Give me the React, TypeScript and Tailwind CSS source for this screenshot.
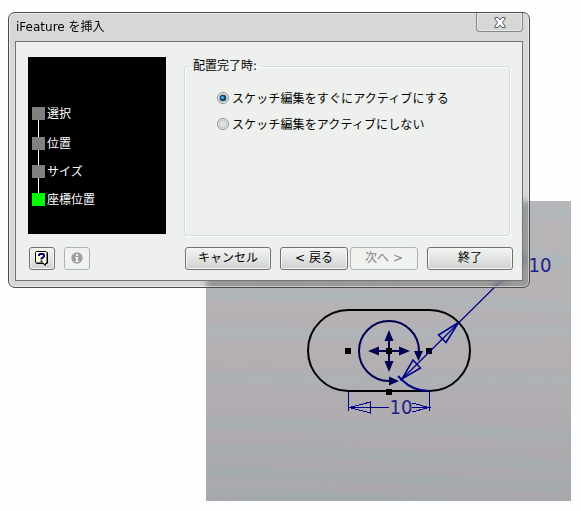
import React from "react";

const STEPS = [
  { label: "選択", gap: "h-[30px]", active: false },
  { label: "位置", gap: "h-[28px]", active: false },
  { label: "サイズ", gap: "h-[28px]", active: false },
  { label: "座標位置", gap: "h-[13px]", active: true },
];

const BANDS = [
  { d: "M290 8 Q330 10 365 14", color: "#aeb7ba" },
  { d: "M290 48 Q330 52 365 62", color: "#aeb7ba" },
  { d: "M0 94 Q180 92 365 108", color: "#adb6b8" },
  { d: "M0 130 Q180 138 365 128", color: "#adb6b8" },
  { d: "M0 176 Q180 180 365 178", color: "#abb3b5" },
  { d: "M0 222 Q180 224 365 236", color: "#a6aeb0" },
  { d: "M0 248 Q180 252 365 266", color: "#a4acae" },
  { d: "M0 270 Q180 276 365 287", color: "#a2aaac" },
  { d: "M0 292 Q150 296 365 308", color: "#a2aaac" },
];

function Sketch() {
  return (
    <svg className="absolute left-[206px] top-[201px]" width="365" height="300" viewBox="206 201 365 300">
      <defs>
        <linearGradient id="base" x1="0" y1="0" x2="0" y2="1">
          <stop offset="0" stopColor="#b9b6ba" />
          <stop offset="0.5" stopColor="#b3afb3" />
          <stop offset="1" stopColor="#aba8ad" />
        </linearGradient>
        <filter id="soft" filterUnits="userSpaceOnUse" x="-20" y="-20" width="405" height="345">
          <feGaussianBlur stdDeviation="2.500" />
        </filter>
      </defs>
      <rect x="206" y="201" width="365" height="300" fill="url(#base)" />
      <g transform="translate(206 201)" fill="none" strokeWidth="11" opacity="0.85" filter="url(#soft)">
        {BANDS.map((b) => (
          <path key={b.d} d={b.d} stroke={b.color} />
        ))}
      </g>
      <rect x="308" y="310" width="162" height="81" rx="40.5" fill="none" stroke="#000" strokeWidth="2" />
      <g fill="none" stroke="#000050" strokeWidth="2">
        <path d="M389 381 A30 30 0 1 1 419 351 V353" />
        <path d="M371 351 H408 M389 333 V369" />
      </g>
      <g fill="#000050">
        <path d="M389 330 L393.500 341 H384.500Z M389 372 L393.500 361 H384.500Z M368 351 L379 346.500 V355.500Z M410 351 L399 346.500 V355.500Z" />
        <path d="M418.500 361 L414 351 H423Z M399 381 L389 376.500 V385.500Z" />
      </g>
      <g fill="#000">
        <rect x="345" y="348" width="6" height="6" />
        <rect x="386" y="348" width="6" height="6" />
        <rect x="426" y="348" width="6" height="6" />
        <rect x="386" y="389" width="6" height="6" />
      </g>
      <g fill="none" stroke="#00008c" strokeWidth="1.300">
        <path d="M525 257 L402 379" />
        <path d="M398 376 L402 380 Q413 391 429 391" strokeWidth="2" />
        <path d="M458.500 322.500 L438.500 335 L446 342.500Z M402 379 L413 360 L420.500 368Z" strokeWidth="1.500" />
      </g>
      <g fill="none" stroke="#00008c" strokeWidth="1" shapeRendering="crispEdges">
        <path d="M348.500 392 V411 M429.500 392 V411 M349 407.500 H389 M412 407.500 H429" />
        <path d="M349 407.500 L370.500 402 V413Z" />
        <path d="M412 403 L429 407.500 L412 412" />
      </g>
      <g fill="#20208c" fontFamily="DejaVu Sans, sans-serif" fontSize="19">
        <text x="389.500" y="414" textLength="23" lengthAdjust="spacingAndGlyphs">10</text>
        <text x="528.500" y="271.500" textLength="23" lengthAdjust="spacingAndGlyphs">10</text>
      </g>
    </svg>
  );
}

const buttonBase =
  "flex h-[23px] items-center justify-center rounded-[3px] border whitespace-nowrap pb-px";
const enabledButton =
  "border-[#707070] bg-linear-to-b from-[#f3f4f3] from-0% via-[#e2e5e2] via-50% to-[#ced1ce] shadow-[inset_0_0_0_1px_#f6f8f6]";
const disabledButton = "border-[#adb2b5] bg-[#f0f2f0] text-[#838383]";

function Radio({ label, checked }: { label: string; checked?: boolean }) {
  return (
    <div className="flex h-[26px] items-center gap-[3px]">
      <svg width="12" height="12" viewBox="0 0 12 12">
        <circle cx="6" cy="6" r="5.500" fill="#f2f2f2" stroke="#8e8f8f" />
        <circle cx="6" cy="6" r="4" fill="#dcdedf" stroke="#b9bcbe" strokeWidth=".7" />
        {checked && (
          <>
            <circle cx="6" cy="6" r="3.300" fill="#104868" />
            <circle cx="5.500" cy="5.500" r="1.600" fill="#42b8e8" />
          </>
        )}
      </svg>
      <span className="pt-px leading-4 tracking-[0.12px]">{label}</span>
    </div>
  );
}

function Dialog() {
  return (
    <div className="absolute left-2 top-3 flex h-[276px] w-[522px] flex-col overflow-hidden rounded-[7px] border border-[#4a4c4b] bg-[#0c1c08]/17 px-[6px] pb-[6px] shadow-[inset_0_0_0_1px_rgba(255,255,255,0.5)] backdrop-blur-[3px]">
      <div className="flex h-7 shrink-0 justify-between">
        <span className="pl-px pt-[6px] leading-4">iFeature を挿入</span>
        <div className="flex h-[19px] w-[47px] items-center justify-center rounded-b-[4px] border border-t-0 border-[#858987] shadow-[inset_0_0_0_1px_#e6e9e6]">
          <svg width="12" height="11" viewBox="0 0 12 11">
            <path
              d="M1 .5H4L6 3L8 .5H11V2L8.300 5.500L11 9V10.500H8L6 8L4 10.500H1V9L3.700 5.500L1 2Z"
              fill="#fff"
              stroke="#53566b"
            />
          </svg>
        </div>
      </div>
      <div className="flex min-h-0 flex-1 flex-col border border-[#707472] bg-[#eef0ee] pl-3 pr-[9px] pt-[15px]">
        <div className="flex h-[177px] gap-[18px]">
          <div className="h-[177px] w-[138px] bg-black pl-1 pt-[50px] text-white">
            {STEPS.map((s) => (
              <div key={s.label} className={"relative flex items-start gap-[2px] " + s.gap}>
                {!s.active && <div className="absolute left-[6px] top-0 h-full w-px bg-white" />}
                <div className={"relative h-[13px] w-[13px] " + (s.active ? "bg-[#00ff00]" : "bg-[#808080]")} />
                <span className="leading-[14px]">{s.label}</span>
              </div>
            ))}
          </div>
          <fieldset className="mt-[1px] h-[178px] w-[326px] rounded-[3px] border border-[#d3dce5] pl-8 shadow-[inset_1px_1px_0_#fff,1px_1px_0_#fff]">
            <legend className="-ml-[27px] px-[3px] leading-4">配置完了時:</legend>
            <div className="pt-[11px]">
              <Radio label="スケッチ編集をすぐにアクティブにする" checked />
              <Radio label="スケッチ編集をアクティブにしない" />
            </div>
          </fieldset>
        </div>
        <div className="mt-[13px] flex">
          <div className={`${buttonBase} ${enabledButton} ml-px w-[26px]`}>
            <svg width="14" height="15" viewBox="0 0 14 15">
              <path d="M2 1H12L13 2V12L12 13H11V15L8 13H2L1 12V2Z" fill="#000" />
              <path d="M1 .5H11L12 1.500V11.500L10.500 12.500V14L8 12H1.500L.5 11V1.500Z" fill="#ffffe0" stroke="#000" />
              <path d="M4 5V4L5 3H8L9 4V5.500L6.500 7.500V8.500M6.500 9.500V11" fill="none" stroke="#000080" strokeWidth="2" />
            </svg>
          </div>
          <div className={`${buttonBase} ${disabledButton} ml-[9px] w-[26px]`}>
            <svg width="12" height="12" viewBox="0 0 12 12">
              <circle cx="6" cy="6" r="5.700" fill="#a0a0a0" />
              <path d="M5 2H7V4H5ZM4 5H7V9H8V10H4V9H5V6H4Z" fill="#f4f4f4" />
            </svg>
          </div>
          <div className={`${buttonBase} ${enabledButton} ml-[95px] w-[86px]`}>キャンセル</div>
          <div className={`${buttonBase} ${enabledButton} ml-[9px] w-[68px]`}>&lt; 戻る</div>
          <div className={`${buttonBase} ${disabledButton} ml-[2px] w-[68px]`}>次へ &gt;</div>
          <div className={`${buttonBase} ${enabledButton} ml-[9px] w-[86px]`}>終了</div>
        </div>
      </div>
    </div>
  );
}

export default function App() {
  return (
    <div className="relative h-[511px] w-[581px] overflow-hidden bg-[#fefefe] text-[12px] text-black [font-family:'DejaVu_Sans','Noto_Sans_CJK_JP',sans-serif]">
      <Sketch />
      <Dialog />
    </div>
  );
}
